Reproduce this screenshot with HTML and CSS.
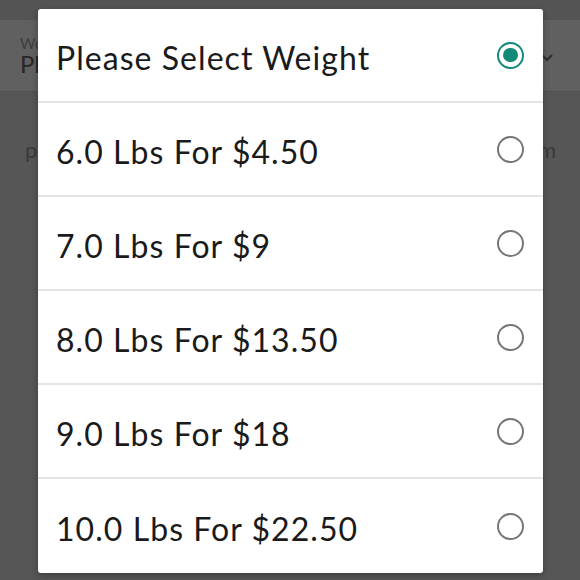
FILE: index.html
```html
<!DOCTYPE html>
<html>
<head>
<meta charset="utf-8">
<link rel="stylesheet" href="styles.css">
</head>
<body>
<div class="page">
  <div class="topbar"></div>
  <div class="field">
    <div class="field-text">
      <div class="field-label">Weight</div>
      <div class="field-value">Please Select</div>
    </div>
    <svg class="chev" width="14" height="10" viewBox="0 0 14 10"><path d="M2 2 L7 7 L12 2" fill="none" stroke="#2f2f2f" stroke-width="2"/></svg>
  </div>
  <div class="row-behind">
    <span>per</span>
    <span>item</span>
  </div>
</div>
<div class="dialog">
  <div class="opt"><span class="lbl">Please Select Weight</span><span class="radio on"></span></div>
  <div class="opt"><span class="lbl">6.0 Lbs For $4.50</span><span class="radio"></span></div>
  <div class="opt"><span class="lbl">7.0 Lbs For $9</span><span class="radio"></span></div>
  <div class="opt"><span class="lbl">8.0 Lbs For $13.50</span><span class="radio"></span></div>
  <div class="opt"><span class="lbl">9.0 Lbs For $18</span><span class="radio"></span></div>
  <div class="opt last"><span class="lbl">10.0 Lbs For $22.50</span><span class="radio"></span></div>
</div>
</body>
</html>
```
FILE: styles.css
```css
html, body {
  margin: 0;
  padding: 0;
  width: 580px;
  height: 580px;
  overflow: hidden;
  background: #555555;
  font-family: Lato, "Noto Sans", sans-serif;
}
.page {
  width: 580px;
  height: 580px;
  display: flex;
  flex-direction: column;
}
.topbar {
  height: 20px;
  background: #545454;
}
.field {
  height: 71px;
  background: #606060;
  border-bottom: 1px solid #505050;
  display: flex;
  align-items: center;
  justify-content: space-between;
  padding: 0 26px 0 20px;
}
.field-label {
  font-size: 15px;
  color: #3e3e3e;
  line-height: 16px;
}
.field-value {
  font-size: 24px;
  color: #262626;
  line-height: 26px;
}
.chev { margin-top: 4px; }
.row-behind {
  flex: 1;
  background: #565656;
  display: flex;
  justify-content: space-between;
  padding: 44px 24px 0 25px;
  font-size: 22px;
  color: #3a3a3a;
}
.dialog {
  position: absolute;
  left: 38px;
  top: 9px;
  width: 505px;
  background: #ffffff;
  border-radius: 3px;
  box-shadow: 0 2px 6px rgba(0,0,0,0.3);
  display: flex;
  flex-direction: column;
}
.opt {
  height: 92px;
  border-bottom: 2px solid #e4e4e4;
  display: flex;
  align-items: center;
  justify-content: space-between;
  padding: 0 19px 0 18px;
}
.opt.last { border-bottom: none; height: 94px; }
.lbl {
  font-size: 32px;
  font-weight: 400;
  color: #1a1a1a;
  letter-spacing: 1.05px;
  padding-top: 4px;
}
.radio {
  width: 23px;
  height: 23px;
  border: 2.5px solid #767676;
  border-radius: 50%;
  box-sizing: content-box;
  position: relative;
}
.radio.on { border-color: #138a78; }
.radio.on::after {
  content: "";
  position: absolute;
  left: 4.25px;
  top: 4.25px;
  width: 14.5px;
  height: 14.5px;
  border-radius: 50%;
  background: #138a78;
}
```
